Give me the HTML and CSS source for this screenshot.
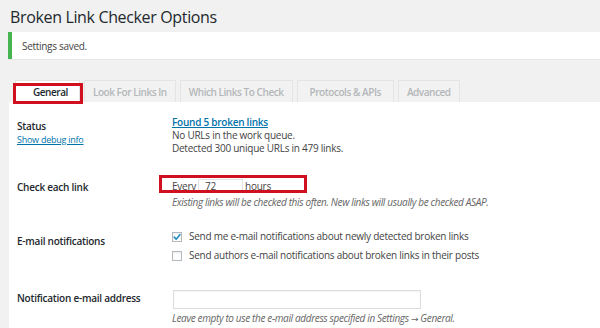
FILE: index.html
```html
<!DOCTYPE html>
<html>
<head>
<meta charset="utf-8">
<title>Broken Link Checker Options</title>
<link rel="stylesheet" href="styles.css">
</head>
<body>
<div class="wrap">
  <h1 class="title">Broken Link Checker Options</h1>
  <div class="notice"><p>Settings saved.</p></div>
  <nav class="tabs">
    <a class="tab active">General<span class="annot annot-tab"></span></a>
    <a class="tab">Look For Links In</a>
    <a class="tab">Which Links To Check</a>
    <a class="tab tab-wide">Protocols &amp; APIs</a>
    <a class="tab">Advanced</a>
  </nav>
  <div class="panel">
    <div class="row row-status">
      <div class="th">
        <div class="lbl">Status</div>
        <a class="debug">Show debug info</a>
      </div>
      <div class="td">
        <a class="found">Found 5 broken links</a>
        <div class="line">No URLs in the work queue.</div>
        <div class="line">Detected 300 unique URLs in 479 links.</div>
      </div>
    </div>
    <div class="row row-check">
      <div class="th"><div class="lbl">Check each link</div></div>
      <div class="td">
        <div class="every">
          <span>Every</span>
          <span class="num">72</span>
          <span>hours</span>
          <span class="annot annot-every"></span>
        </div>
        <div class="hint">Existing links will be checked this often. New links will usually be checked ASAP.</div>
      </div>
    </div>
    <div class="row row-email">
      <div class="th"><div class="lbl">E-mail notifications</div></div>
      <div class="td">
        <label class="cb-line"><span class="cb"><svg viewBox="0 0 10 10" width="10" height="10"><path d="M2.2 5.1 L4.2 7.2 L7.9 2.7" fill="none" stroke="#1e8cbe" stroke-width="1.6" stroke-linecap="round" stroke-linejoin="round"/></svg></span>Send me e-mail notifications about newly detected broken links</label>
        <label class="cb-line"><span class="cb"></span>Send authors e-mail notifications about broken links in their posts</label>
      </div>
    </div>
    <div class="row row-address">
      <div class="th"><div class="lbl">Notification e-mail address</div></div>
      <div class="td">
        <div class="text-input"></div>
        <div class="hint">Leave empty to use the e-mail address specified in Settings <span class="arrow">→</span> General.</div>
      </div>
    </div>
  </div>
</div>
</body>
</html>
```
FILE: styles.css
```css
* { box-sizing: border-box; }
body {
  margin: 0;
  background: #f1f1f1;
  font-family: "Open Sans", "Liberation Sans", sans-serif;
  font-size: 10px;
  color: #444;
  letter-spacing: -0.25px;
}
.wrap { padding-left: 8px; }
.title {
  margin: 0;
  padding: 6px 0 0 2px;
  height: 32px;
  font-size: 16px;
  line-height: 22px;
  font-weight: 400;
  color: #23282d;
  letter-spacing: -0.35px;
}
.notice {
  height: 27px;
  background: #fff;
  border-left: 4px solid #46b450;
  padding-left: 10px;
  display: flex;
  align-items: center;
  box-shadow: 0 1px 1px rgba(0,0,0,0.04);
}
.notice p { margin: 0; font-size: 10px; letter-spacing: -0.3px; }
.tabs {
  display: flex;
  gap: 4px;
  margin-top: 21px;
  padding-left: 7px;
  height: 22px;
}
.tab {
  position: relative;
  height: 22px;
  padding: 0 8px;
  display: flex;
  align-items: center;
  border: 1px solid #e4e4e4;
  border-bottom: none;
  background: #f2f2f2;
  color: #b4b7ba;
  font-weight: 600;
  font-size: 10px;
  letter-spacing: -0.45px;
}
.tab-wide { padding: 0 12px; }
.tab.active {
  background: #fff;
  color: #23282d;
  padding: 0 11px 0 17px;
}
.annot {
  position: absolute;
  border: 3px solid #d0101e;
  pointer-events: none;
}
.annot-tab { left: -3px; top: 2px; width: 70px; height: 21px; }
.panel {
  background: #fff;
  margin-left: 1px;
  padding-left: 8px;
  min-height: 240px;
}
.row {
  display: grid;
  grid-template-columns: 155px 1fr;
}
.lbl { font-weight: 600; color: #23282d; line-height: 13px; }
.td { line-height: 13px; }
.row-status .th { padding-top: 18px; }
.row-status .td { padding-top: 14px; padding-bottom: 10px; }
.debug {
  display: block;
  font-size: 9px;
  line-height: 13px;
  color: #0073aa;
  text-decoration: underline;
}
.found {
  display: block;
  color: #0073aa;
  font-weight: 600;
  text-decoration: underline;
}
.row-check .th { padding-top: 16px; }
.row-check .td { padding-top: 14px; padding-bottom: 10px; }
.every {
  position: relative;
  display: flex;
  align-items: center;
  gap: 2px;
  height: 14px;
}
.num {
  width: 45px;
  height: 14px;
  border: 1px solid #e2e2e2;
  padding-left: 6px;
  line-height: 12px;
}
.annot-every { left: -13px; top: -4px; width: 148px; height: 18px; }
.hint {
  margin-top: 3px;
  font-style: italic;
  font-size: 10px;
  letter-spacing: -0.35px;
  line-height: 12px;
  color: #666;
}
.arrow { font-family: "DejaVu Sans", sans-serif; font-style: normal; font-size: 9px; }
.row-email .th { padding-top: 17px; }
.row-email .td { padding-top: 9px; padding-bottom: 10px; }
.cb-line {
  display: flex;
  align-items: center;
  gap: 7px;
  line-height: 19px;
  height: 19px;
}
.cb {
  width: 10px;
  height: 10px;
  border: 1px solid #b4b9be;
  background: #fff;
  box-shadow: inset 0 1px 2px rgba(0,0,0,0.08);
  display: flex;
  align-items: center;
  justify-content: center;
}
.cb svg { display: block; flex: none; }
.row-address .th { padding-top: 17px; }
.row-address .td { padding-top: 15px; padding-bottom: 10px; }
.text-input {
  width: 248px;
  height: 19px;
  border: 1px solid #ddd;
  box-shadow: inset 0 1px 2px rgba(0,0,0,0.05);
  margin-left: 1px;
}
.row-address .hint { margin-top: 3px; }
```
